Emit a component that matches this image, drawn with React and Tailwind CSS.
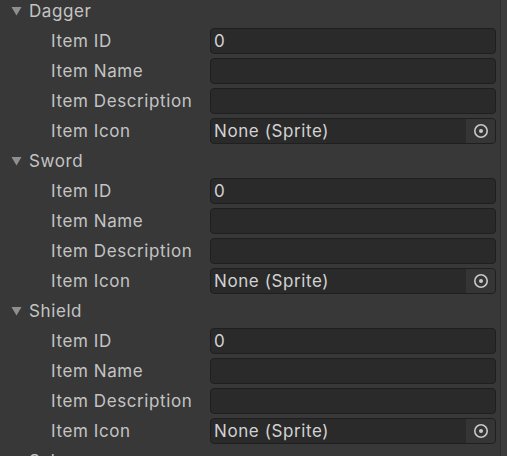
import React from "react";

const sections = ["Dagger", "Sword", "Shield", "Salve"];

function Triangle() {
  return (
    <svg width="11" height="10" viewBox="0 0 11 10" className="shrink-0">
      <polygon points="0.5,1 10.5,1 5.5,9.5" fill="#8f8f8f" />
    </svg>
  );
}

function Field({ children }) {
  return (
    <div className="flex-1 h-[26px] rounded-[4px] border border-[#1f1f1f] bg-[#2a2a2a] flex items-center pl-[3px] text-[#d2d2d2]">
      {children}
    </div>
  );
}

function ObjectField() {
  return (
    <div className="flex-1 h-[26px] rounded-[4px] border border-[#1f1f1f] bg-[#2a2a2a] flex items-center pl-[3px] text-[#d2d2d2]">
      <span className="flex-1">None (Sprite)</span>
      <div className="w-[29px] h-[24px] bg-[#353535] rounded-r-[3px] flex items-center justify-center">
        <svg width="16" height="16" viewBox="0 0 16 16">
          <circle cx="8" cy="8" r="6.2" fill="none" stroke="#c8c8c8" strokeWidth="1.6" />
          <circle cx="8" cy="8" r="2" fill="#c8c8c8" />
        </svg>
      </div>
    </div>
  );
}

function Row({ label, children }) {
  return (
    <div className="h-[30px] flex items-center pr-[4px]">
      <div className="w-[210px] shrink-0 pl-[51px] text-[#c4c4c4]">{label}</div>
      {children}
    </div>
  );
}

export default function App() {
  return (
    <div
      className="w-[507px] h-[456px] overflow-hidden bg-[#383838] flex text-[17px] leading-none tracking-[0.6px]"
      style={{ fontFamily: "Inter, 'Noto Sans', sans-serif" }}
    >
      <div className="flex-1 flex flex-col -mt-[4px]">
        {sections.map((name) => (
          <div key={name} className="flex flex-col">
            <div className="h-[30px] flex items-center pl-[11px] gap-[7px] text-[#c4c4c4]">
              <Triangle />
              <span>{name}</span>
            </div>
            <Row label="Item ID">
              <Field>0</Field>
            </Row>
            <Row label="Item Name">
              <Field />
            </Row>
            <Row label="Item Description">
              <Field />
            </Row>
            <Row label="Item Icon">
              <ObjectField />
            </Row>
          </div>
        ))}
      </div>
      <div className="w-[7px] shrink-0 bg-[#3c3c3c] border-l border-[#2e2e2e]" />
    </div>
  );
}
